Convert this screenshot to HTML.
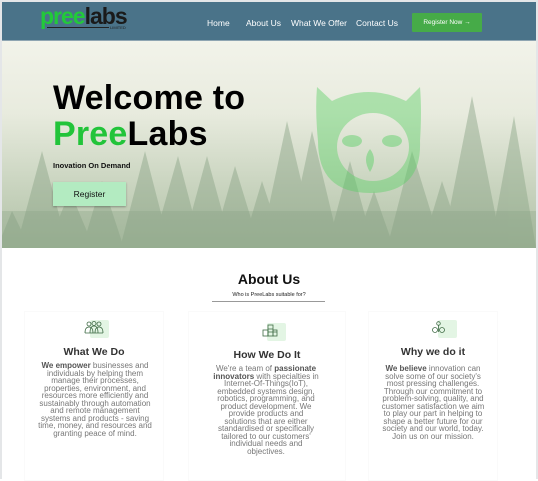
<!DOCTYPE html>
<html><head><meta charset="utf-8">
<style>
*{margin:0;padding:0;box-sizing:border-box}
html,body{width:538px;height:479px;overflow:hidden;background:#fff;font-family:"Liberation Sans",sans-serif}
.frame{position:absolute;left:0;top:0;width:538px;height:479px;border:2px solid #e4e6e8;border-bottom:none}
nav{position:absolute;left:2px;top:2px;width:534px;height:39px;background:#4a7389;border-bottom:1px solid #8fa5b2}
.logo{position:absolute;left:38px;top:3px;font-weight:bold;font-size:23px;letter-spacing:-1px;line-height:22px;white-space:nowrap}
.logo .lg{color:#22c93a}.logo .lb{color:#1a1a1a}
.lim{position:absolute;left:45px;top:25px;width:62px;height:1px;background:#222}
.limt{position:absolute;left:108px;top:23px;font-size:4px;color:#222}
.nl{position:absolute;top:16px;color:#fff;font-size:8.5px}
.rbtn{position:absolute;left:410px;top:11px;width:70px;height:19px;background:#46ab48;color:#fff;font-size:6.5px;text-align:center;line-height:19px;border-radius:1px}
.hero{position:absolute;left:2px;top:41px;width:534px;height:207px;overflow:hidden;background:linear-gradient(180deg,#f2f3ea 0%,#e8ebde 35%,#c9d4bf 70%,#b0c1a6 100%)}
h1{position:absolute;left:53px;top:80px;font-size:34px;line-height:36px;font-weight:bold;color:#000;letter-spacing:0.2px}
h1 span{color:#22c43a}
.tag{position:absolute;left:53px;top:161px;font-size:7.5px;font-weight:bold;color:#111}
.reg{position:absolute;left:53px;top:182px;width:73px;height:24px;background:#b3ebc1;font-size:8.5px;text-align:center;line-height:24px;color:#111;box-shadow:0 1px 2px rgba(0,0,0,.3)}
.sec{position:absolute;text-align:center}
.t1{left:0;width:538px;top:271px;font-size:14px;font-weight:bold;color:#111}
.t2{left:0;width:538px;top:292px;font-size:5.5px;color:#222}
.ul{position:absolute;left:212px;top:301px;width:113px;height:1px;background:#999}
.card{position:absolute;border:1px solid #fafafa;top:311px;height:170px}
h3{position:absolute;text-align:center;font-size:10.5px;color:#333;font-weight:bold}
.tx{position:absolute;text-align:center;font-size:8px;line-height:7.5px;color:#777}
.tx b{color:#555}
.ib{position:absolute;width:19px;height:18px;background:#e3f5e4;border-radius:2px}
</style></head><body>
<div class="frame"></div>
<nav>
<div class="logo"><span class="lg">pree</span><span class="lb">labs</span></div>
<div class="lim"></div><div class="limt">LIMITED</div>
<div class="nl" style="left:205px">Home</div>
<div class="nl" style="left:244px">About Us</div>
<div class="nl" style="left:289px">What We Offer</div>
<div class="nl" style="left:354px">Contact Us</div>
<div class="rbtn">Register Now &rarr;</div>
</nav>
<div class="hero">
<svg width="534" height="207" style="position:absolute;left:0;top:0">
<g fill="#8aa386" opacity="0.45">
<polygon points="40,110 14,207 66,207"/>
<polygon points="68,150 45,207 92,207"/>
<polygon points="100,140 80,207 122,207"/>
<polygon points="143,110 118,207 168,207"/>
<polygon points="176,115 150,207 200,207"/>
<polygon points="205,115 180,207 230,207"/>
<polygon points="233,125 210,207 258,207"/>
<polygon points="260,140 240,207 282,207"/>
<polygon points="285,80 258,207 315,207"/>
<polygon points="310,90 285,207 338,207"/>
<polygon points="348,120 325,207 372,207"/>
<polygon points="372,150 352,207 392,207"/>
<polygon points="410,110 385,207 440,207"/>
<polygon points="440,140 420,207 462,207"/>
<polygon points="470,55 440,207 500,207"/>
<polygon points="512,75 488,207 534,207"/>
<polygon points="10,170 -5,207 28,207"/>
</g>
<rect x="0" y="170" width="534" height="37" fill="#86a082" opacity="0.3"/>
<path fill="#55cf62" fill-opacity="0.42" fill-rule="evenodd" d="M315,46 L330,60 Q366,42 404,60 L418,46 Q420,70 418,100 Q420,152 368,152 Q316,152 316,100 Q313,70 315,46 Z M335,106 A36,34 0 1,0 407,106 A36,34 0 1,0 335,106 Z"/>
<ellipse cx="350" cy="100" rx="10" ry="6" fill="#55cf62" fill-opacity="0.45"/>
<ellipse cx="390" cy="100" rx="10" ry="6" fill="#55cf62" fill-opacity="0.45"/>
<path d="M368,108 Q376,118 368,131 Q360,118 368,108 Z" fill="#55cf62" fill-opacity="0.45"/>
</svg>
</div>
<h1>Welcome to<br><span>Pree</span>Labs</h1>
<div class="tag">Inovation On Demand</div>
<div class="reg">Register</div>
<div class="sec t1">About Us</div>
<div class="sec t2">Who is PreeLabs suitable for?</div>
<div class="ul"></div>
<div class="card" style="left:24px;width:140px"></div>
<div class="card" style="left:188px;width:158px"></div>
<div class="card" style="left:368px;width:130px"></div>
<div class="ib" style="left:90px;top:320px"></div>
<svg style="position:absolute;left:84px;top:321px" width="20" height="13" fill="none" stroke="#3f6b45" stroke-width="0.8"><circle cx="5" cy="3" r="2"/><circle cx="10" cy="2.5" r="2"/><circle cx="15" cy="3" r="2"/><path d="M1,12 Q1,6 5,6 Q9,6 9,12 M6,12 Q6,5 10,5 Q14,5 14,12 M11,12 Q11,6 15,6 Q19,6 19,12 M1,12 H19"/></svg>
<div class="ib" style="left:267px;top:323px"></div>
<svg style="position:absolute;left:262px;top:323px" width="16" height="14" fill="none" stroke="#3f6b45" stroke-width="0.8"><rect x="1" y="7" width="5" height="6"/><rect x="6" y="2" width="5" height="11"/><rect x="11" y="7" width="4" height="6"/><path d="M6,6 H11 M6,9 H15"/></svg>
<div class="ib" style="left:438px;top:320px"></div>
<svg style="position:absolute;left:432px;top:321px" width="13" height="13" fill="none" stroke="#3f6b45" stroke-width="0.8"><circle cx="6.5" cy="2.5" r="1.8"/><circle cx="3" cy="9" r="2.5"/><circle cx="10" cy="9" r="2.5"/><path d="M6.5,4.5 V11"/></svg>
<h3 style="left:24px;width:140px;top:346px">What We Do</h3>
<div class="tx" style="left:38px;width:114px;top:362px"><b>We empower</b> businesses and individuals by helping them manage their processes, properties, environment, and resources more efficiently and sustainably through automation and remote management systems and products - saving time, money, and resources and granting peace of mind.</div>
<h3 style="left:188px;width:158px;top:349px">How We Do It</h3>
<div class="tx" style="left:212px;width:108px;top:365px">We're a team of <b>passionate innovators</b> with specialties in Internet-Of-Things(IoT), embedded systems design, robotics, programming, and product development. We provide products and solutions that are either standardised or specifically tailored to our customers' individual needs and objectives.</div>
<h3 style="left:368px;width:130px;top:346px">Why we do it</h3>
<div class="tx" style="left:378px;width:110px;top:365px"><b>We believe</b> innovation can solve some of our society's most pressing challenges. Through our commitment to problem-solving, quality, and customer satisfaction we aim to play our part in helping to shape a better future for our society and our world, today. Join us on our mission.</div>
</body></html>
